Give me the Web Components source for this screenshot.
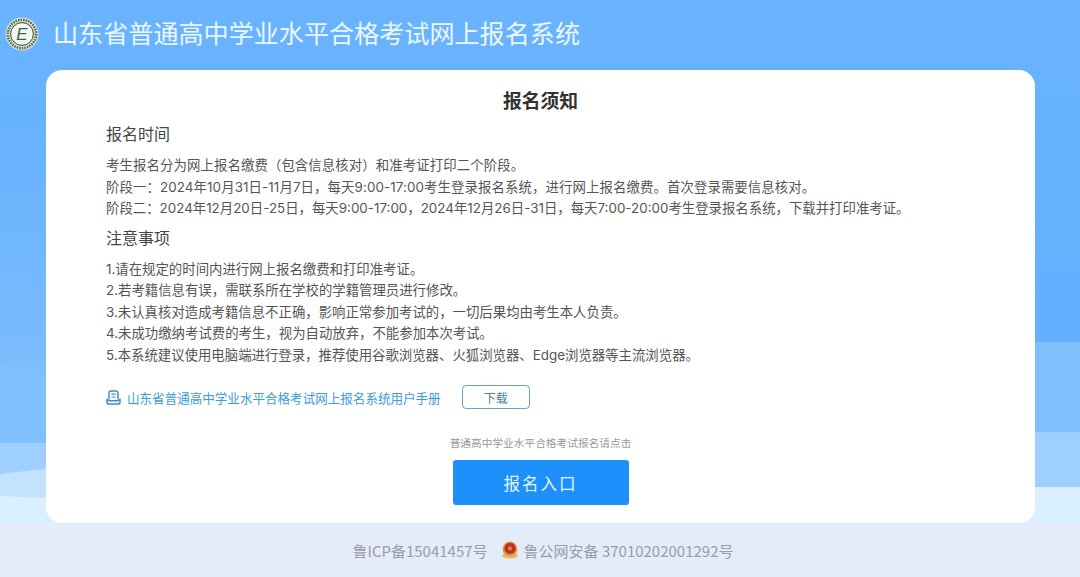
<!DOCTYPE html>
<html lang="zh">
<head>
<meta charset="utf-8">
<title>山东省普通高中学业水平合格考试网上报名系统</title>
<style>
    html, body { margin: 0; padding: 0; height: 100%; overflow: hidden; }
    body { font-family: "Inter", "Noto Sans CJK SC", sans-serif; }
</style>
</head>
<body>
<reg-page>
    <reg-header slot="header">山东省普通高中学业水平合格考试网上报名系统</reg-header>
    <reg-card slot="main">
        <reg-section title="报名时间">
            <p class="wide">考生报名分为网上报名缴费（包含信息核对）和准考证打印二个阶段。</p>
            <p class="wide">阶段一：2024年10月31日-11月7日，每天9:00-17:00考生登录报名系统，进行网上报名缴费。首次登录需要信息核对。</p>
            <p>阶段二：2024年12月20日-25日，每天9:00-17:00，2024年12月26日-31日，每天7:00-20:00考生登录报名系统，下载并打印准考证。</p>
        </reg-section>
        <reg-section title="注意事项">
            <p>1.请在规定的时间内进行网上报名缴费和打印准考证。</p>
            <p>2.若考籍信息有误，需联系所在学校的学籍管理员进行修改。</p>
            <p>3.未认真核对造成考籍信息不正确，影响正常参加考试的，一切后果均由考生本人负责。</p>
            <p>4.未成功缴纳考试费的考生，视为自动放弃，不能参加本次考试。</p>
            <p>5.本系统建议使用电脑端进行登录，推荐使用谷歌浏览器、火狐浏览器、Edge浏览器等主流浏览器。</p>
        </reg-section>
        <reg-manual>山东省普通高中学业水平合格考试网上报名系统用户手册</reg-manual>
        <reg-entry hint="普通高中学业水平合格考试报名请点击">报名入口</reg-entry>
    </reg-card>
    <reg-footer slot="footer"></reg-footer>
</reg-page>

<script>
//page shell - blue background with the waves behind the card
var template_page = document.createElement("template");
template_page.innerHTML = `
<style>
    :host {
        display: flex;
        flex-direction: column;
        position: relative;
        height: 577px;
        overflow: hidden;
        background: linear-gradient(180deg, #69b3ff 0%, #64b0fe 60%, #68b3fe 100%);
    }
    .waves { position: absolute; left: 0; top: 0; width: 1080px; height: 577px; }
    .main { position: relative; padding-left: 46px; flex: 1; min-height: 0; }
    .header, .footer { position: relative; }
</style>
<svg class="waves" viewBox="0 0 1080 577">
    <defs>
        <linearGradient id="side" x1="0" y1="0" x2="0" y2="1">
            <stop offset="0" stop-color="#7cbdfc" stop-opacity="0"/>
            <stop offset="1" stop-color="#7cbdfc"/>
        </linearGradient>
    </defs>
    <rect x="0" y="120" width="46" height="250" fill="url(#side)"/>
    <path d="M0 366 L46 370 L1035 342 L1080 342 L1080 577 L0 577 Z" fill="#80c0fe"/>
    <path d="M0 443 L46 443 L1035 432 L1080 432 L1080 577 L0 577 Z" fill="#9fcfff"/>
    <path d="M0 474 C16 472 32 470 46 469 L1035 487 L1080 487 L1080 577 L0 577 Z" fill="#c3e2fe"/>
    <path d="M0 496 L46 498 L1035 487 L1080 487 L1080 577 L0 577 Z" fill="#daefff"/>
</svg>
<div class="header"><slot name="header"></slot></div>
<div class="main"><slot name="main"></slot></div>
<div class="footer"><slot name="footer"></slot></div>
`;
class RegPage extends HTMLElement {
    constructor() {
        super();
        this.attachShadow({ mode: "open" });
    }
    connectedCallback() {
        this.shadowRoot.appendChild(template_page.content.cloneNode(true));
    }
}
customElements.define("reg-page", RegPage);

//top bar - logo and system name
var template_header = document.createElement("template");
template_header.innerHTML = `
<style>
    :host {
        display: flex;
        align-items: center;
        height: 70px;
        padding: 0 0 2px 5px;
        box-sizing: border-box;
        color: #eaf8ff;
        font-size: 25.1px;
    }
    .logo { width: 34px; height: 34px; margin: 0 14px 1px 0; flex: none; }
    .logo text { font-family: "Liberation Sans", sans-serif; font-style: italic; font-size: 17px; fill: #2c6b45; }
    .name { line-height: 34px; }
</style>
<svg class="logo" viewBox="0 0 34 34">
    <circle cx="17" cy="17" r="16.5" fill="#d9e4d6"/>
    <circle cx="17" cy="17" r="14.2" fill="none" stroke="#5a6b55" stroke-width="2.6" stroke-dasharray="1.6 1"/>
    <circle cx="17" cy="17" r="11.4" fill="#f4f7f2" stroke="#2b4a35" stroke-width="1"/>
    <text x="17" y="23" text-anchor="middle">E</text>
</svg>
<span class="name"><slot></slot></span>
`;
class RegHeader extends HTMLElement {
    constructor() {
        super();
        this.attachShadow({ mode: "open" });
    }
    connectedCallback() {
        this.shadowRoot.appendChild(template_header.content.cloneNode(true));
    }
}
customElements.define("reg-header", RegHeader);

//white card
var template_card = document.createElement("template");
template_card.innerHTML = `
<style>
    :host {
        display: block;
        width: 989px;
        height: 453px;
        box-sizing: border-box;
        padding: 19px 60px 0;
        background: #fff;
        border-radius: 16px;
    }
    h1 {
        margin: 0 0 7px;
        text-align: center;
        font-size: 18.8px;
        line-height: 26px;
        font-weight: 700;
        color: #333;
    }
</style>
<h1>报名须知</h1>
<slot></slot>
`;
class RegCard extends HTMLElement {
    constructor() {
        super();
        this.attachShadow({ mode: "open" });
    }
    connectedCallback() {
        this.shadowRoot.appendChild(template_card.content.cloneNode(true));
    }
}
customElements.define("reg-card", RegCard);

//section title + lines of text
var template_section = document.createElement("template");
template_section.innerHTML = `
<style>
    :host { display: block; margin-bottom: 6px; }
    h2 {
        margin: 0 0 9px;
        font-size: 16px;
        line-height: 24px;
        font-weight: 400;
        color: #444;
    }
    ::slotted(p) {
        margin: 0;
        font-size: 13.4px;
        line-height: 21.5px;
        color: #555;
        white-space: nowrap;
    }
    ::slotted(p.wide) { letter-spacing: .1px; }
</style>
<h2></h2>
<slot></slot>
`;
class RegSection extends HTMLElement {
    constructor() {
        super();
        this.attachShadow({ mode: "open" });
    }
    connectedCallback() {
        this.shadowRoot.appendChild(template_section.content.cloneNode(true));
        if (this.getAttribute("title")) {
            this.shadowRoot.querySelector("h2").innerText = this.getAttribute("title");
        }
    }
}
customElements.define("reg-section", RegSection);

//manual link row with the download button
var template_manual = document.createElement("template");
template_manual.innerHTML = `
<style>
    :host {
        display: flex;
        align-items: center;
        margin-top: 19px;
        color: #3d9ad9;
        font-size: 12.56px;
        height: 24px;
    }
    svg { width: 15px; height: 15px; margin-right: 6px; flex: none; }
    .btn {
        margin-left: 21px;
        width: 68px;
        height: 24px;
        box-sizing: border-box;
        border: 1px solid #6ba3c6;
        border-radius: 4px;
        display: flex;
        align-items: center;
        justify-content: center;
        font-size: 12px;
        color: #4a7fa6;
    }
</style>
<svg viewBox="0 0 15 15" fill="none" stroke="#3d8fcb" stroke-width="1.5">
    <path d="M3 9.5V3.2C3 1.9 3.9 1 5.2 1h4.6C11.1 1 12 1.9 12 3.2v6.3"/>
    <path d="M1 9.6c1.2 0 1.4 1.2 2.4 1.2h8.2c1 0 1.2-1.2 2.4-1.2v2.6c0 1-.8 1.8-1.8 1.8H2.8c-1 0-1.8-.8-1.8-1.8z"/>
    <path d="M5.4 4.2h4.2M5.4 7h4.2" stroke-width="1.2"/>
</svg>
<span><slot></slot></span>
<div class="btn">下载</div>
`;
class RegManual extends HTMLElement {
    constructor() {
        super();
        this.attachShadow({ mode: "open" });
    }
    connectedCallback() {
        this.shadowRoot.appendChild(template_manual.content.cloneNode(true));
    }
}
customElements.define("reg-manual", RegManual);

//entry button
var template_entry = document.createElement("template");
template_entry.innerHTML = `
<style>
    :host {
        display: flex;
        flex-direction: column;
        align-items: center;
        margin-top: 27px;
    }
    .hint { font-size: 10.7px; line-height: 16px; color: #999; }
    .btn {
        margin-top: 8px;
        width: 176px;
        height: 45px;
        border-radius: 3px;
        background: #1e90fb;
        color: #e6f6ff;
        display: flex;
        align-items: center;
        justify-content: center;
        font-size: 16.5px;
        letter-spacing: 2px;
    }
</style>
<div class="hint"></div>
<div class="btn"><slot></slot></div>
`;
class RegEntry extends HTMLElement {
    constructor() {
        super();
        this.attachShadow({ mode: "open" });
    }
    connectedCallback() {
        this.shadowRoot.appendChild(template_entry.content.cloneNode(true));
        if (this.getAttribute("hint")) {
            this.shadowRoot.querySelector(".hint").innerText = this.getAttribute("hint");
        }
    }
}
customElements.define("reg-entry", RegEntry);

//bottom record numbers
var template_footer = document.createElement("template");
template_footer.innerHTML = `
<style>
    :host {
        display: flex;
        align-items: center;
        justify-content: center;
        height: 54px;
        padding-left: 6px;
        box-sizing: border-box;
        background: #e4ebf9;
        color: #9a9ea6;
        font-family: "Noto Sans CJK SC", sans-serif;
        font-size: 15px;
    }
    svg { width: 18px; height: 18px; margin: 0 5px 0 13px; flex: none; }
</style>
<span>鲁ICP备15041457号</span>
<svg viewBox="0 0 18 18">
    <ellipse cx="9" cy="14.6" rx="8" ry="3" fill="#edbd62"/>
    <circle cx="9" cy="8" r="7.4" fill="#d99a3c"/>
    <circle cx="9" cy="7.4" r="5.6" fill="#bb2f26"/>
    <circle cx="9" cy="7.4" r="2.2" fill="#dc7a50"/>
</svg>
<span>鲁公网安备 37010202001292号</span>
`;
class RegFooter extends HTMLElement {
    constructor() {
        super();
        this.attachShadow({ mode: "open" });
    }
    connectedCallback() {
        this.shadowRoot.appendChild(template_footer.content.cloneNode(true));
    }
}
customElements.define("reg-footer", RegFooter);
</script>
</body>
</html>
